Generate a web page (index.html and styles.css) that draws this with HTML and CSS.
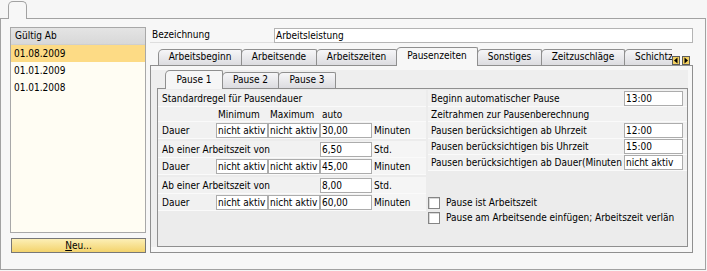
FILE: index.html
```html
<!DOCTYPE html>
<html>
<head>
<meta charset="utf-8">
<link rel="stylesheet" href="styles.css">
</head>
<body>
<div class="top"><div class="mini-tab"></div></div>
<div class="frame">
  <div class="left">
    <div class="list">
      <div class="list-head">Gültig Ab</div>
      <div class="list-row sel">01.08.2009</div>
      <div class="list-row">01.01.2009</div>
      <div class="list-row">01.01.2008</div>
    </div>
    <div class="btn-neu"><u>N</u>eu...</div>
  </div>
  <div class="right">
    <div class="field">
      <div class="field-label">Bezeichnung</div>
      <div class="field-input">Arbeitsleistung</div>
    </div>
    <div class="tabstrip">
      <div class="tabs">
        <div class="tab t1">Arbeitsbeginn</div>
        <div class="tab t2">Arbeitsende</div>
        <div class="tab t3">Arbeitszeiten</div>
        <div class="tab t4 active">Pausenzeiten</div>
        <div class="tab t5">Sonstiges</div>
        <div class="tab t6">Zeitzuschläge</div>
        <div class="tab t7">Schichtzeiten</div>
      </div>
      <div class="arrows">
        <span class="arr"><svg width="6" height="7" viewBox="0 0 6 7"><path d="M4.5 0.5 L1 3.5 L4.5 6.5 Z" fill="#000"/></svg></span>
        <span class="arr"><svg width="6" height="7" viewBox="0 0 6 7"><path d="M1.5 0.5 L5 3.5 L1.5 6.5 Z" fill="#000"/></svg></span>
      </div>
    </div>
    <div class="pane">
      <div class="inner">
        <div class="subtabs">
          <div class="stab s1 active">Pause 1</div>
          <div class="stab s2">Pause 2</div>
          <div class="stab s3">Pause 3</div>
        </div>
        <div class="subpane">
          <div class="sec-left">
            <div class="lrow title"><span class="cfull">Standardregel für Pausendauer</span></div>
            <div class="lrow head"><span class="c0"></span><span class="c1">Minimum</span><span class="c1">Maximum</span><span class="c1">auto</span><span class="cu"></span></div>
            <div class="lrow gap"><span class="c0">Dauer</span><span class="inp">nicht aktiv</span><span class="inp">nicht aktiv</span><span class="inp">30,00</span><span class="cu">Minuten</span></div>
            <div class="lrow"><span class="cwide">Ab einer Arbeitszeit von</span><span class="inp">6,50</span><span class="cu">Std.</span></div>
            <div class="lrow gap"><span class="c0">Dauer</span><span class="inp">nicht aktiv</span><span class="inp">nicht aktiv</span><span class="inp">45,00</span><span class="cu">Minuten</span></div>
            <div class="lrow"><span class="cwide">Ab einer Arbeitszeit von</span><span class="inp">8,00</span><span class="cu">Std.</span></div>
            <div class="lrow"><span class="c0">Dauer</span><span class="inp">nicht aktiv</span><span class="inp">nicht aktiv</span><span class="inp">60,00</span><span class="cu">Minuten</span></div>
          </div>
          <div class="sec-right">
            <div class="rrow r1"><span class="rlab">Beginn automatischer Pause</span><span class="rinp">13:00</span></div>
            <div class="rrow r2"><span class="rlab">Zeitrahmen zur Pausenberechnung</span></div>
            <div class="rrow r3"><span class="rlab">Pausen berücksichtigen ab Uhrzeit</span><span class="rinp">12:00</span></div>
            <div class="rrow r4"><span class="rlab">Pausen berücksichtigen bis Uhrzeit</span><span class="rinp">15:00</span></div>
            <div class="rrow r5"><span class="rlab">Pausen berücksichtigen ab Dauer(Minuten</span><span class="rinp">nicht aktiv</span></div>
            <div class="checks">
              <div class="crow"><span class="cbox"></span><span class="ctext">Pause ist Arbeitszeit</span></div>
              <div class="crow"><span class="cbox"></span><span class="ctext">Pause am Arbeitsende einfügen; Arbeitszeit verlängern</span></div>
            </div>
          </div>
        </div>
      </div>
    </div>
  </div>
</div>
</body>
</html>
```
FILE: styles.css
```css
* { box-sizing: border-box; }
html, body { margin: 0; padding: 0; }
body {
  width: 707px;
  height: 271px;
  overflow: hidden;
  background: #f6f6f6;
  font-family: "DejaVu Sans Condensed", "DejaVu Sans", "Liberation Sans", sans-serif;
  font-stretch: condensed;
  font-size: 10px;
  color: #000;
}
.top { height: 18px; padding: 1px 0 0 8px; display: flex; position: relative; z-index: 1; }
.mini-tab {
  width: 19px; height: 18px;
  border: 1px solid #a2a2a2; border-bottom: none;
  border-radius: 5px 5px 0 0;
  background: #f7f7f7;
}
.frame {
  width: 706px; height: 252px;
  border: 1px solid #a2a2a2;
  background: #f7f7f7;
  display: flex; align-items: flex-start;
  padding: 8px 0 0 9px;
}
.left { width: 136px; display: flex; flex-direction: column; }
.list { height: 206px; border: 1px solid #a8a8a8; background: #fffdf3; }
.list-head {
  height: 17px; padding-left: 4px; line-height: 16px;
  background: linear-gradient(#e4e4e4, #d8d8d8);
  border-bottom: 1px solid #cfcfcf;
}
.list-row { height: 17px; padding-left: 3px; line-height: 17px; }
.list-row.sel { background: #fddb85; }
.btn-neu {
  margin: 5px 0 0 1px; width: 135px; height: 15px;
  border: 1px solid #777;
  background: linear-gradient(#fcefb6, #f3d36c);
  text-align: center; line-height: 13px;
}
.btn-neu u { text-decoration-thickness: 1px; }

.right { width: 543px; margin-left: 4px; display: flex; flex-direction: column; }
.field { display: flex; height: 16px; }
.field-label { width: 124px; padding-left: 2px; border-bottom: 1px solid #dedede; line-height: 15px; }
.field-input {
  width: 419px; height: 15px; margin-top: 1px;
  border: 1px solid #b4b4b4; background: #fff;
  padding-left: 1px; line-height: 13px;
}

.tabstrip { display: flex; height: 19px; margin-top: 4px; margin-bottom: -1px; padding-left: 8px; position: relative; z-index: 1; }
.tabs { flex: 1; display: flex; overflow: hidden; align-items: flex-start; }
.tab {
  flex: none; height: 16px; margin-top: 2px; margin-left: -1px;
  border: 1px solid #8f8f8f; border-bottom: none;
  border-radius: 5px 2px 0 0;
  background: linear-gradient(#f6f6f8, #dcdce0);
  text-align: center; line-height: 13px;
  white-space: nowrap;
}
.tab:first-child { margin-left: 0; }
.tab.active { height: 19px; margin-top: 0; background: #f7f7f7; position: relative; z-index: 1; line-height: 16px; }
.t1 { width: 84px; } .t2 { width: 76px; } .t3 { width: 81px; } .t4 { width: 82px; }
.t5 { width: 65px; } .t6 { width: 84px; } .t7 { width: 100px; padding-left: 10px; text-align: left; }
.arrows { display: flex; gap: 2px; align-items: flex-end; padding: 0 3px 1px 0; }
.arr {
  width: 8px; height: 9px;
  border: 1px solid #5c5c5c; background: #f2d060;
  display: flex; align-items: center; justify-content: center;
}
.arr svg { display: block; }

.pane { height: 188px; border: 1px solid #8f8f8f; background: #f7f7f7; padding: 4px 4px 5px 0; }
.inner { height: 177px; background: #eeeeee; padding-left: 6px; display: flex; flex-direction: column; }
.subtabs { display: flex; height: 19px; margin-bottom: -1px; padding-left: 8px; position: relative; z-index: 1; align-items: flex-start; }
.stab {
  flex: none; height: 16px; margin-top: 2px; margin-left: -1px;
  border: 1px solid #8f8f8f; border-bottom: none;
  border-radius: 5px 2px 0 0;
  background: linear-gradient(#f6f6f8, #dcdce0);
  text-align: center; line-height: 14px;
}
.stab:first-child { margin-left: 0; }
.stab.active { height: 19px; margin-top: 0; background: #f6f6f6; position: relative; z-index: 1; line-height: 17px; }
.s1 { width: 58px; } .s2 { width: 57px; } .s3 { width: 58px; }

.subpane { flex: 1; border: 1px solid #8f8f8f; background: #ececec; display: flex; gap: 2px; padding-top: 1px; }
.sec-left { width: 268px; display: flex; flex-direction: column; }
.lrow { display: flex; align-items: center; height: 17px; background: #f1f1f1; border-bottom: 1px solid #fafafa; flex: none; }
.lrow.title { height: 17px; }
.lrow.head { height: 15px; }
.lrow.gap { margin-bottom: 2px; }
.cfull { padding-left: 4px; }
.c0 { width: 58px; padding-left: 4px; flex: none; }
.c1 { width: 52px; padding-left: 2px; flex: none; }
.cwide { width: 162px; padding-left: 4px; flex: none; }
.cu { width: 54px; padding-left: 2px; flex: none; align-self: stretch; display: flex; align-items: center; background: #f5f5f5; }
.lrow.head .cu, .lrow.title .cu { background: transparent; }
.inp {
  width: 52px; height: 15px; flex: none;
  border: 1px solid #acacac; background: #fff;
  padding-left: 1px; line-height: 13px;
  white-space: nowrap; overflow: hidden;
}

.sec-right { width: 259px; display: flex; flex-direction: column; }
.rrow { display: flex; align-items: center; background: #f1f1f1; border-bottom: 1px solid #fafafa; flex: none; }
.r1 { height: 17px; } .r2 { height: 15px; } .r3 { height: 17px; } .r4 { height: 16px; } .r5 { height: 16px; }
.rlab { width: 196px; padding-left: 3px; white-space: nowrap; overflow: hidden; flex: none; }
.rinp {
  width: 59px; height: 15px; flex: none;
  border: 1px solid #acacac; background: #fff;
  padding-left: 1px; line-height: 13px;
  white-space: nowrap; overflow: hidden;
}
.checks { margin-top: 24px; display: flex; flex-direction: column; }
.crow { height: 15px; display: flex; align-items: center; }
.cbox {
  width: 12px; height: 12px; flex: none;
  border: 1px solid #858585; background: #fff;
  box-shadow: inset 1px 1px 0 #d8d8d8;
}
.ctext { margin-left: 6px; width: 228px; white-space: nowrap; overflow: hidden; }
```
